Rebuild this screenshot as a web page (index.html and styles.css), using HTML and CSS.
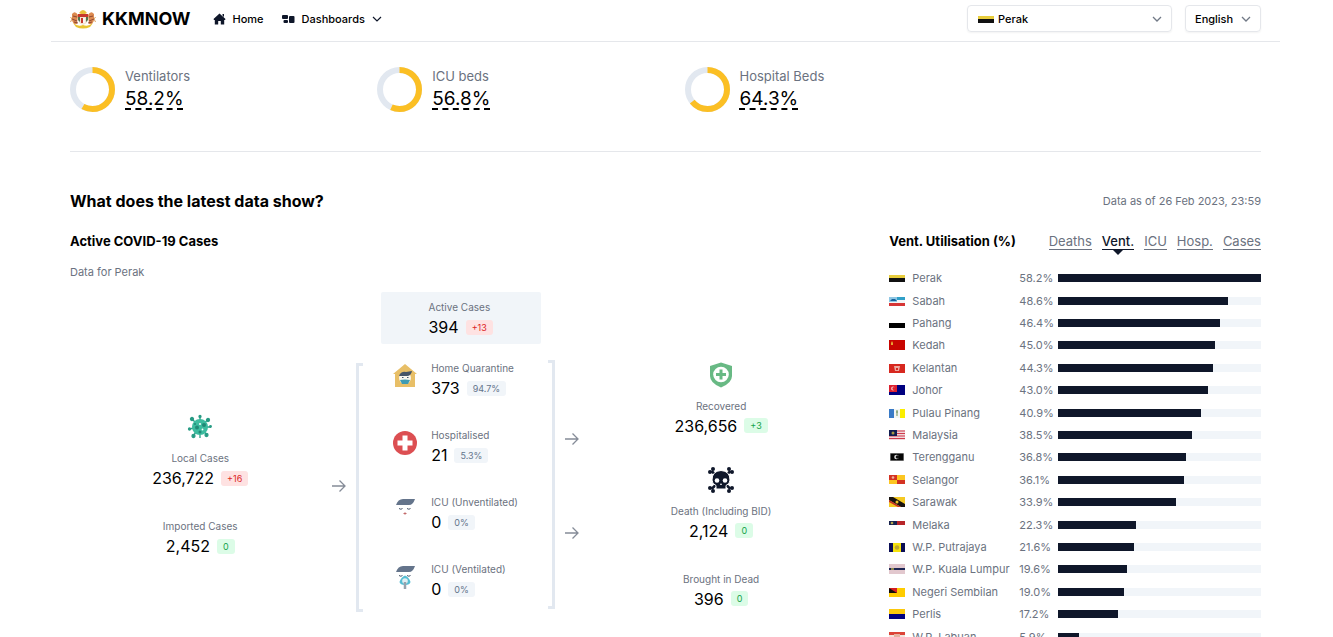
FILE: index.html
```html
<!DOCTYPE html>
<html lang="en">
<head>
<meta charset="utf-8">
<title>KKMNOW</title>
<link rel="stylesheet" href="styles.css">
</head>
<body>
<header class="topbar">
  <a class="brand" href="#">
    <svg class="crest" viewBox="0 0 26 20" aria-hidden="true">
      <path d="M2 5 Q5 1 8 6 L7 15 Q3 16 2 11Z M24 5 Q21 1 18 6 L19 15 Q23 16 24 11Z" fill="#dc8a50"/>
      <path d="M0.500 8 L2 10 L0.500 13 M25.500 8 L24 10 L25.500 13" stroke="#d9a05f" fill="none"/>
      <path d="M3 7 L7 8 M2 10 L7 12 M4 13 L8 14 M23 7 L19 8 M24 10 L19 12 M22 13 L18 14" stroke="#8f4733" stroke-width="1"/>
      <path d="M9 4 Q13 -2 17 4 L15 5 H11Z" fill="#e9c03c"/>
      <path d="M8 5 H18 V11 Q17 15 13 16 Q9 15 8 11Z" fill="#f3e3cf"/>
      <path d="M8 5 H18 V8 H8Z" fill="#c7392e"/>
      <path d="M8 8 H10 V13 L8 11Z M16 8 H18 V11 L16 13Z" fill="#4f7650"/>
      <path d="M11 9 H13 V14 H11Z" fill="#c7392e"/><path d="M13 9 H15 V14 H13Z" fill="#f6f6f6"/>
      <path d="M3 14 Q8 18 13 16 Q18 18 23 14 L20 18 Q13 21 6 18Z" fill="#e8c431"/>
    </svg>
    <span class="brand-name">KKMNOW</span>
  </a>
  <nav class="nav">
    <a class="nav-item" href="#">
      <svg class="nav-icon" viewBox="0 0 13 12" aria-hidden="true"><path d="M6.500 0.500 L12.500 6 L12 7 H11.200 V11.500 H7.800 V8 H5.200 V11.500 H1.800 V7 H1 L0.500 6Z M9.500 1 H11 V4 L9.500 2.500Z" fill="#0f172a"/></svg>
      Home
    </a>
    <button class="nav-item" type="button">
      <svg class="nav-icon" viewBox="0 0 13 12" aria-hidden="true"><g fill="#0f172a"><rect x="0" y="2" width="6" height="4" rx="1"/><rect x="1.500" y="7" width="4.500" height="3" rx="1"/><rect x="7" y="3" width="5.500" height="7" rx="1"/></g></svg>
      Dashboards
      <svg class="chevron" viewBox="0 0 10 6" aria-hidden="true"><path d="M1 1 L5 5 L9 1" fill="none" stroke="#0f172a" stroke-width="1.200"/></svg>
    </button>
  </nav>
  <div class="filters">
    <div class="picker picker-state">
      <svg class="flag" viewBox="0 0 16 10" aria-hidden="true"><path d="M0 2h16v3H0z" fill="#e8cd3c"/><path d="M0 5h16v4H0z" fill="#111"/></svg>
      <select aria-label="State"><option>Perak</option></select>
      <svg class="chevron muted" viewBox="0 0 10 6" aria-hidden="true"><path d="M1 1 L5 5 L9 1" fill="none" stroke="#717986" stroke-width="1.300"/></svg>
    </div>
    <div class="picker picker-language">
      <select aria-label="Language"><option>English</option></select>
      <svg class="chevron muted" viewBox="0 0 10 6" aria-hidden="true"><path d="M1 1 L5 5 L9 1" fill="none" stroke="#717986" stroke-width="1.300"/></svg>
    </div>
  </div>
</header>

<main class="content">
  <section class="gauges">
    <div class="gauge">
      <svg class="donut" viewBox="0 0 45 45" aria-hidden="true"><circle cx="22.500" cy="22.500" r="19.500" fill="none" stroke="#e2e8f0" stroke-width="6"/><circle cx="22.500" cy="22.500" r="19.500" fill="none" stroke="#fbbf24" stroke-width="6" pathLength="100" stroke-dasharray="58.2 100" transform="rotate(-90 22.500 22.500)"/></svg>
      <div><p class="gauge-label">Ventilators</p><p class="gauge-value">58.2%</p></div>
    </div>
    <div class="gauge">
      <svg class="donut" viewBox="0 0 45 45" aria-hidden="true"><circle cx="22.500" cy="22.500" r="19.500" fill="none" stroke="#e2e8f0" stroke-width="6"/><circle cx="22.500" cy="22.500" r="19.500" fill="none" stroke="#fbbf24" stroke-width="6" pathLength="100" stroke-dasharray="56.8 100" transform="rotate(-90 22.500 22.500)"/></svg>
      <div><p class="gauge-label">ICU beds</p><p class="gauge-value">56.8%</p></div>
    </div>
    <div class="gauge">
      <svg class="donut" viewBox="0 0 45 45" aria-hidden="true"><circle cx="22.500" cy="22.500" r="19.500" fill="none" stroke="#e2e8f0" stroke-width="6"/><circle cx="22.500" cy="22.500" r="19.500" fill="none" stroke="#fbbf24" stroke-width="6" pathLength="100" stroke-dasharray="64.3 100" transform="rotate(-90 22.500 22.500)"/></svg>
      <div><p class="gauge-label">Hospital Beds</p><p class="gauge-value">64.3%</p></div>
    </div>
  </section>

  <div class="section-head">
    <h2 class="section-title">What does the latest data show?</h2>
    <p class="note">Data as of 26 Feb 2023, 23:59</p>
  </div>

  <div class="panels">
    <section class="cases">
      <h3 class="panel-title">Active COVID-19 Cases</h3>
      <p class="note cases-note">Data for Perak</p>
      <div class="flow">
        <div class="active-box">
          <div class="stat"><p class="stat-label">Active Cases</p><p class="stat-value">394 <span class="badge red">+13</span></p></div>
        </div>
        <div class="flow-side">
          <div class="stat centered">
            <svg class="stat-icon" viewBox="0 0 26 26" aria-hidden="true"><g stroke="#2a9d86" stroke-width="1.300" fill="#23967f"><path d="M13 13V2M13 13L20.500 6M13 13H24M13 13L20 21M13 13V24M13 13L6 22M13 13L2 15M13 13L5 5"/><circle cx="13" cy="2.500" r="1"/><circle cx="21" cy="6" r="1.500"/><circle cx="23.500" cy="12.500" r=".8"/><circle cx="19.500" cy="21" r="1.500"/><circle cx="6.500" cy="22" r="1.500"/><circle cx="2.500" cy="15" r="1"/><circle cx="5" cy="5" r="1.500"/></g><circle cx="13" cy="13" r="8" fill="#3cbc9f"/><g fill="#218a77"><circle cx="10" cy="13.500" r="2"/><circle cx="17" cy="11" r="2"/><circle cx="13" cy="18" r="1.500"/><circle cx="8" cy="10" r="1"/></g><circle cx="13" cy="10" r="1" fill="#fff"/><circle cx="15.500" cy="15.500" r=".9" fill="#fff"/></svg>
            <p class="stat-label">Local Cases</p><p class="stat-value">236,722 <span class="badge red">+16</span></p>
          </div>
          <div class="stat centered"><p class="stat-label">Imported Cases</p><p class="stat-value">2,452 <span class="badge green">0</span></p></div>
        </div>
        <div class="flow-middle">
          <svg class="arrow" viewBox="0 0 14 14" aria-hidden="true"><path d="M0 7H13M7.500 1.500L13 7L7.500 12.500" fill="none" stroke="#858c98" stroke-width="1.300"/></svg>
          <div class="bracketed">
            <span class="bracket left"></span>
            <div class="breakdown">
              <div class="breakdown-row">
                <svg class="row-icon" viewBox="0 0 24 24" aria-hidden="true"><path d="M12 0L24 10H22V23H2V10H0Z" fill="#e8bf67"/><circle cx="12" cy="14" r="6" fill="#f8f6ef"/><path d="M6 12Q8 7 13 8L19 7Q18 12 14 12Z" fill="#465568"/><path d="M7 16Q12 15 17 16L15 20H9Z" fill="#3f9bb1"/><path d="M9 13.500h1.500M14 13.500h1.500" stroke="#41576c"/></svg>
                <div class="stat"><p class="stat-label">Home Quarantine</p><p class="stat-value">373 <span class="badge gray">94.7%</span></p></div>
              </div>
              <div class="breakdown-row">
                <svg class="row-icon" viewBox="0 0 24 24" aria-hidden="true"><circle cx="12" cy="12" r="12" fill="#dc4f52"/><path d="M9.500 4.500H14.500V9.500H19.500V14.500H14.500V19.500H9.500V14.500H4.500V9.500H9.500Z" fill="#fff"/></svg>
                <div class="stat"><p class="stat-label">Hospitalised</p><p class="stat-value">21 <span class="badge gray">5.3%</span></p></div>
              </div>
              <div class="breakdown-row">
                <svg class="row-icon" viewBox="0 0 24 24" aria-hidden="true"><path d="M3 7Q5 1 10 1H22Q20 7 16 7Z" fill="#64748b"/><path d="M6 10.500Q8 12 9.500 10.500M14 10.500Q16 12 17.500 10.500" fill="none" stroke="#475569"/><path d="M10.500 15.500H13.500M12 14.300V16.700" stroke="#c36b6b"/></svg>
                <div class="stat"><p class="stat-label">ICU (Unventilated)</p><p class="stat-value">0 <span class="badge gray">0%</span></p></div>
              </div>
              <div class="breakdown-row">
                <svg class="row-icon" viewBox="0 0 24 24" aria-hidden="true"><path d="M3 7Q5 1 10 1H22Q20 7 16 7Z" fill="#64748b"/><path d="M6 10.500Q8 12 9.500 10.500M14 10.500Q16 12 17.500 10.500" fill="none" stroke="#475569"/><path d="M12 10.500Q16 12 17.500 17Q17 20 12 20Q7 20 6.500 17Q8 12 12 10.500Z" fill="#55bdd3"/><circle cx="12" cy="16" r="2.800" fill="#e1eef2"/><path d="M12 17V24" stroke="#96a3ae" stroke-width="2.500"/></svg>
                <div class="stat"><p class="stat-label">ICU (Ventilated)</p><p class="stat-value">0 <span class="badge gray">0%</span></p></div>
              </div>
            </div>
            <span class="bracket right"></span>
          </div>
          <div class="arrows">
            <svg class="arrow" viewBox="0 0 14 14" aria-hidden="true"><path d="M0 7H13M7.500 1.500L13 7L7.500 12.500" fill="none" stroke="#858c98" stroke-width="1.300"/></svg>
            <svg class="arrow" viewBox="0 0 14 14" aria-hidden="true"><path d="M0 7H13M7.500 1.500L13 7L7.500 12.500" fill="none" stroke="#858c98" stroke-width="1.300"/></svg>
          </div>
        </div>
        <div class="flow-side">
          <div class="stat centered">
            <svg class="stat-icon" viewBox="0 0 26 26" aria-hidden="true"><path d="M13 0.500L24 4V14Q24 21 13 25.500Q2 21 2 14V4Z" fill="#68b984"/><circle cx="13" cy="12.500" r="7.800" fill="#fff"/><path d="M13 7.500V17.500M8 12.500H18" stroke="#68b984" stroke-width="3"/></svg>
            <p class="stat-label">Recovered</p><p class="stat-value">236,656 <span class="badge green">+3</span></p>
          </div>
          <div class="stat centered">
            <svg class="stat-icon" viewBox="0 0 26 26" aria-hidden="true"><path d="M3.500 4L22.500 22M22.500 4L3.500 22" stroke="#0f172a" stroke-width="2.500"/><g fill="#0f172a"><circle cx="2" cy="5" r="2"/><circle cx="5" cy="2" r="2"/><circle cx="24" cy="5" r="2"/><circle cx="21" cy="2" r="2"/><circle cx="2" cy="21" r="2"/><circle cx="5" cy="24" r="2"/><circle cx="24" cy="21" r="2"/><circle cx="21" cy="24" r="2"/></g><path d="M13 3.500Q22 4 22 13Q22 17 18 18.500V22H8V18.500Q4 17 4 13Q4 4 13 3.500Z" fill="#0f172a" stroke="#fff"/><circle cx="9" cy="13.500" r="2.300" fill="#fff"/><circle cx="17" cy="13.500" r="2.300" fill="#fff"/><path d="M13 16L14 18H12Z" fill="#fff"/></svg>
            <p class="stat-label">Death (Including BID)</p><p class="stat-value">2,124 <span class="badge green">0</span></p>
          </div>
          <div class="stat centered"><p class="stat-label">Brought in Dead</p><p class="stat-value">396 <span class="badge green">0</span></p></div>
        </div>
      </div>
    </section>

    <section class="ranking">
      <div class="ranking-head">
        <h3 class="panel-title">Vent. Utilisation (%)</h3>
        <div class="tabs" role="tablist">
          <button class="tab" role="tab" type="button">Deaths</button>
          <button class="tab selected" role="tab" type="button" aria-selected="true">Vent.</button>
          <button class="tab" role="tab" type="button">ICU</button>
          <button class="tab" role="tab" type="button">Hosp.</button>
          <button class="tab" role="tab" type="button">Cases</button>
        </div>
      </div>
      <table class="bars">
        <tr><td class="place"><span class="place-name"><svg class="flag" viewBox="0 0 16 10"><path d="M0 2h16v3H0z" fill="#e8cd3c"/><path d="M0 5h16v4H0z" fill="#111"/></svg>Perak</span></td><td class="pct">58.2%</td><td><div class="track"><div class="fill" style="width:100%"></div></div></td></tr>
        <tr><td class="place"><span class="place-name"><svg class="flag" viewBox="0 0 16 10"><path d="M0 1h16v3H0z" fill="#31a0c8"/><path d="M0 4h16v3H0z" fill="#f4f5f6"/><path d="M0 7h16v3H0z" fill="#d63535"/><path d="M0 1h8v5H0z" fill="#8fc7e4"/><path d="M1 5L3 3H6L8 5Z" fill="#17619b"/></svg>Sabah</span></td><td class="pct">48.6%</td><td><div class="track"><div class="fill" style="width:83.5%"></div></div></td></tr>
        <tr><td class="place"><span class="place-name"><svg class="flag" viewBox="0 0 16 10"><path d="M0 1h16v4H0z" fill="#fff"/><path d="M0 5h16v5H0z" fill="#000"/></svg>Pahang</span></td><td class="pct">46.4%</td><td><div class="track"><div class="fill" style="width:79.7%"></div></div></td></tr>
        <tr><td class="place"><span class="place-name"><svg class="flag" viewBox="0 0 16 10"><path d="M0 0h16v10H0z" fill="#c80500"/><path d="M2 1L3 3L4 1V5H2Z" fill="#e7a634"/></svg>Kedah</span></td><td class="pct">45.0%</td><td><div class="track"><div class="fill" style="width:77.3%"></div></div></td></tr>
        <tr><td class="place"><span class="place-name"><svg class="flag" viewBox="0 0 16 10"><path d="M0 1h16v9H0z" fill="#d7281f"/><path d="M5 3H11L10 8H6Z" fill="#ecaaa2"/><path d="M7 5H9V7H7Z" fill="#d7281f"/></svg>Kelantan</span></td><td class="pct">44.3%</td><td><div class="track"><div class="fill" style="width:76.1%"></div></div></td></tr>
        <tr><td class="place"><span class="place-name"><svg class="flag" viewBox="0 0 16 10"><path d="M0 0h16v10H0z" fill="#000080"/><path d="M0 0h8v7H0z" fill="#dc202f"/><circle cx="4" cy="3.500" r="2" fill="#f4b7b9"/><circle cx="5" cy="3.500" r="1.500" fill="#dc202f"/></svg>Johor</span></td><td class="pct">43.0%</td><td><div class="track"><div class="fill" style="width:73.9%"></div></div></td></tr>
        <tr><td class="place"><span class="place-name"><svg class="flag" viewBox="0 0 16 10"><path d="M0 1h16v9H0z" fill="#f4f6f2"/><path d="M0 1h5v9H0z" fill="#397ac6"/><path d="M11 1h5v9h-5z" fill="#fbee00"/><path d="M8 2V8M7 4H9" stroke="#71925d"/></svg>Pulau Pinang</span></td><td class="pct">40.9%</td><td><div class="track"><div class="fill" style="width:70.3%"></div></div></td></tr>
        <tr><td class="place"><span class="place-name"><svg class="flag" viewBox="0 0 16 10"><path d="M0 0h16v10H0z" fill="#f0d8dc"/><path d="M0 1H16M0 3.500H16M0 6H16M0 8.500H16" stroke="#cf3b4b"/><path d="M0 0h8v6H0z" fill="#111c50"/><circle cx="4" cy="3" r="1.500" fill="#a59844"/></svg>Malaysia</span></td><td class="pct">38.5%</td><td><div class="track"><div class="fill" style="width:66.2%"></div></div></td></tr>
        <tr><td class="place"><span class="place-name"><svg class="flag" viewBox="0 0 16 10"><path d="M1 1h14v8H1z" fill="#bbb"/><path d="M1.500 1.500h13v7h-13z" fill="#050505"/><circle cx="7.500" cy="5" r="2.300" fill="#ddd"/><circle cx="8.500" cy="5" r="1.800" fill="#111"/></svg>Terengganu</span></td><td class="pct">36.8%</td><td><div class="track"><div class="fill" style="width:63.2%"></div></div></td></tr>
        <tr><td class="place"><span class="place-name"><svg class="flag" viewBox="0 0 16 10"><path d="M0 0h16v9H0z" fill="#fcc622"/><path d="M0 0h8v5H0zM8 5h8v4H8z" fill="#d43222"/><circle cx="4" cy="2.500" r="1.300" fill="#eeb39c"/></svg>Selangor</span></td><td class="pct">36.1%</td><td><div class="track"><div class="fill" style="width:62%"></div></div></td></tr>
        <tr><td class="place"><span class="place-name"><svg class="flag" viewBox="0 0 16 10"><path d="M0 0h16v10H0z" fill="#f5c923"/><path d="M0 0H4L16 7V10H12L0 3Z" fill="#191310"/><path d="M0 3V5L9 10H12Z" fill="#c73128"/><circle cx="8" cy="5" r="1.500" fill="#f0c42c"/></svg>Sarawak</span></td><td class="pct">33.9%</td><td><div class="track"><div class="fill" style="width:58.2%"></div></div></td></tr>
        <tr><td class="place"><span class="place-name"><svg class="flag" viewBox="0 0 16 10"><path d="M0 1h16v4H0z" fill="#b72529"/><path d="M0 5h16v5H0z" fill="#fff"/><path d="M0 1h8v4H0z" fill="#18234d"/><circle cx="3" cy="3" r="1.300" fill="#b4a74f"/></svg>Melaka</span></td><td class="pct">22.3%</td><td><div class="track"><div class="fill" style="width:38.3%"></div></div></td></tr>
        <tr><td class="place"><span class="place-name"><svg class="flag" viewBox="0 0 16 10"><path d="M0 1h16v9H0z" fill="#0b0e55"/><path d="M4 1h8v9H4z" fill="#f5e20c"/><circle cx="8" cy="5.500" r="2.300" fill="#bea52e"/></svg>W.P. Putrajaya</span></td><td class="pct">21.6%</td><td><div class="track"><div class="fill" style="width:37.1%"></div></div></td></tr>
        <tr><td class="place"><span class="place-name"><svg class="flag" viewBox="0 0 16 10"><path d="M0 0h16v10H0z" fill="#e2c8ce"/><path d="M0 4h16v2H0z" fill="#1d2553"/><path d="M2 4h3v2H2z" fill="#8e8951"/></svg>W.P. Kuala Lumpur</span></td><td class="pct">19.6%</td><td><div class="track"><div class="fill" style="width:33.7%"></div></div></td></tr>
        <tr><td class="place"><span class="place-name"><svg class="flag" viewBox="0 0 16 10"><path d="M0 1h16v9H0z" fill="#fc0"/><path d="M0 1h8v5H0z" fill="#d51d22"/><path d="M0 1L8 6H0Z" fill="#120e0b"/></svg>Negeri Sembilan</span></td><td class="pct">19.0%</td><td><div class="track"><div class="fill" style="width:32.6%"></div></div></td></tr>
        <tr><td class="place"><span class="place-name"><svg class="flag" viewBox="0 0 16 10"><path d="M0 0h16v5H0z" fill="#fbc80c"/><path d="M0 5h16v5H0z" fill="#000080"/></svg>Perlis</span></td><td class="pct">17.2%</td><td><div class="track"><div class="fill" style="width:29.6%"></div></div></td></tr>
        <tr><td class="place"><span class="place-name"><svg class="flag" viewBox="0 0 16 10"><path d="M0 0h16v10H0z" fill="#f1e6de"/><path d="M0 0h16v3H0z" fill="#dc4438"/><path d="M5 2h6v6H5z" fill="#e6b3a1"/></svg>W.P. Labuan</span></td><td class="pct">5.9%</td><td><div class="track"><div class="fill" style="width:10.1%"></div></div></td></tr>
      </table>
    </section>
  </div>
</main>
</body>
</html>
```

FILE: styles.css
```css
* { box-sizing: border-box; }
body {
  margin: 0;
  padding: 0 53px 0 51px;
  height: 100vh;
  overflow: hidden;
  background: #fff;
  color: #000;
  font-family: Inter, "Liberation Sans", sans-serif;
  font-size: 11px;
}
p, h2, h3 { margin: 0; }
button, select { font: inherit; color: inherit; background: none; border: 0; padding: 0; }
a { color: inherit; text-decoration: none; }
svg { display: block; flex: none; }

.topbar {
  display: flex;
  align-items: center;
  padding: 5px 19px 9px;
  border-bottom: 1px solid #e5e7eb;
}
.brand { display: flex; align-items: center; gap: 6px; }
.crest { width: 26px; height: 20px; }
.brand-name { font-size: 18px; line-height: 24px; font-weight: 700; }
.nav { display: flex; gap: 18px; margin-left: 22px; font-weight: 500; }
.nav-item { display: flex; align-items: center; gap: 7px; }
.nav-icon { width: 13px; height: 12px; }
.chevron { width: 10px; height: 6px; }
.filters { display: flex; gap: 13px; margin-left: auto; }
.picker {
  display: flex;
  align-items: center;
  height: 27px;
  padding: 0 9px;
  border: 1px solid #e5e7eb;
  border-radius: 4px;
  box-shadow: 0 1px 2px #0000000d;
}
.picker-state { width: 205px; gap: 4px; padding-left: 10px; }
.picker-language { width: 76px; }
.picker select { appearance: none; flex: 1; min-width: 0; font-weight: 500; }
.flag { width: 16px; height: 10px; }

.content { padding: 0 19px; }
.gauges {
  display: grid;
  grid-template-columns: repeat(4, 1fr);
  gap: 38px;
  padding: 25px 0 39px;
  border-bottom: 1px solid #e5e7eb;
}
.gauge { display: flex; gap: 10px; align-items: center; }
.donut { width: 45px; height: 45px; }
.gauge-label { font-size: 13px; line-height: 18px; color: #6b7280; }
.gauge-value {
  width: max-content;
  font-size: 19px;
  line-height: 27px;
  font-weight: 400;
  text-decoration: underline dashed 2px;
  text-underline-offset: 3px;
  text-decoration-skip-ink: none;
}

.section-head {
  display: flex;
  justify-content: space-between;
  align-items: center;
  padding: 38px 0 19px;
}
.section-title { font-size: 16px; line-height: 22px; font-weight: 700; }
.note { color: #6b7280; line-height: 16px; }
.panels { display: grid; grid-template-columns: repeat(3, 1fr); gap: 38px; }
.cases { grid-column: span 2; }
.panel-title { font-size: 13px; line-height: 20px; font-weight: 700; }
.cases-note { margin-top: 13px; }
.flow {
  display: grid;
  grid-template-columns: repeat(3, 1fr);
  row-gap: 16px;
  margin-top: 12px;
  align-items: center;
}
.active-box {
  grid-column: 2;
  justify-self: center;
  width: 160px;
  padding: 8px 0 5px;
  display: flex;
  justify-content: center;
  background: #f1f5f9;
  border-radius: 2px;
}
.flow-side { grid-row: 2; display: grid; gap: 29px; }
.flow-middle {
  grid-row: 2;
  display: flex;
  align-items: center;
  justify-content: center;
  gap: 10px;
  padding-right: 10px;
}
.centered { display: flex; flex-direction: column; align-items: center; }
.stat-icon { width: 26px; height: 26px; margin-bottom: 11px; }
.stat-label { font-size: 10px; line-height: 15px; color: #6b7280; white-space: nowrap; }
.stat-value { display: flex; align-items: center; gap: 7px; font-size: 16px; line-height: 24px; font-weight: 400; }
.badge { padding: 0 6px; border-radius: 3px; font-size: 9px; line-height: 15px; }
.red { background: #fee2e2; color: #dc2626; }
.green { background: #dcfce7; color: #16a34a; }
.gray { background: #f1f5f9; color: #64748b; }
.arrow { width: 14px; height: 14px; }
.arrows { display: grid; gap: 80px; }
.bracketed { display: flex; height: 252px; width: 199px; }
.bracket { width: 7px; height: 249px; border: 3px solid #e2e8f0; }
.left { border-right: 0; align-self: flex-end; }
.right { border-left: 0; }
.breakdown { flex: 1; display: grid; gap: 28px; align-content: start; padding: 1px 0 0 30px; }
.breakdown-row { display: flex; gap: 14px; }
.row-icon { width: 24px; height: 24px; margin-top: 3px; }

.ranking-head { display: flex; justify-content: space-between; align-items: center; }
.tabs { display: flex; gap: 10px; }
.tab {
  position: relative;
  padding-top: 1px;
  font-size: 13px;
  line-height: 16px;
  color: #6b7280;
  border-bottom: 1px solid #6b7280;
}
.selected { color: #0f172a; font-weight: 500; border-color: #0f172a; }
.selected::after {
  content: "";
  position: absolute;
  top: 100%;
  left: 50%;
  margin-left: -6px;
  border: 6px solid transparent;
  border-top-color: #0f172a;
  border-bottom: 0;
}
.bars { width: 100%; height: 381px; margin-top: 16px; border-collapse: collapse; color: #6b7280; line-height: 16px; }
.bars td { padding: 0; }
.place { width: 130px; }
.place-name { display: flex; align-items: center; gap: 7px; white-space: nowrap; }
.pct { width: 39px; }
.track { height: 8px; background: #f1f5f9; }
.fill { height: 8px; background: #0f172a; }
```
